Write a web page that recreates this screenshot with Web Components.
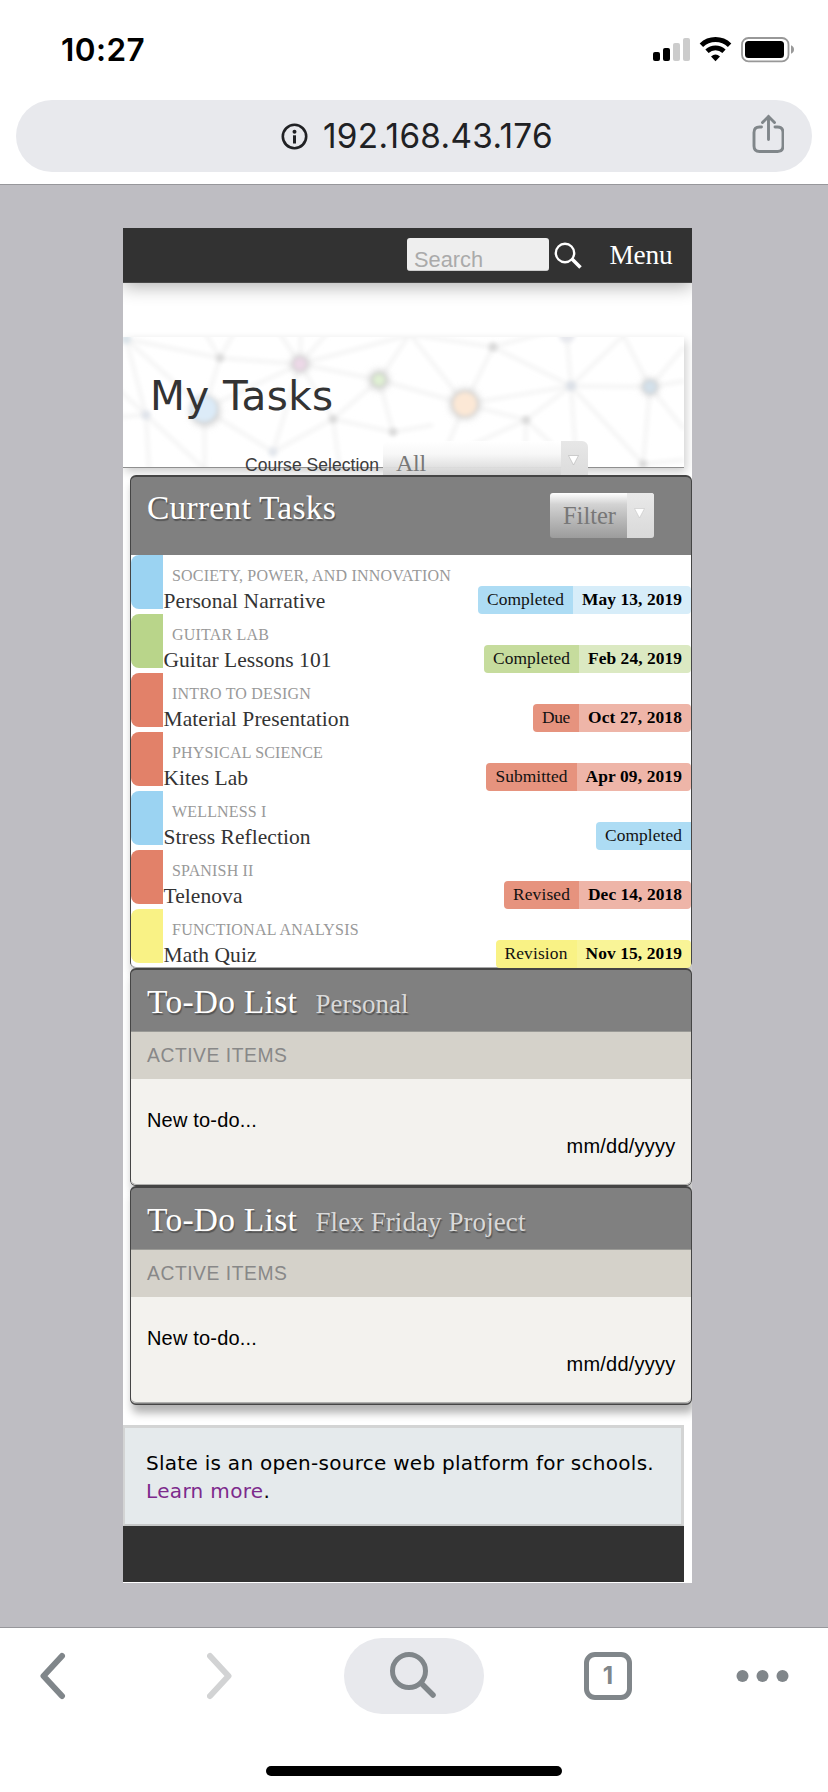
<!DOCTYPE html>
<html lang="en">
<head>
<meta charset="utf-8">
<title>My Tasks</title>
<style>
html, body { margin: 0; padding: 0; }
body { width: 828px; height: 1792px; background: #fff; overflow: hidden; font-family: "Liberation Serif", serif; }
</style>
</head>
<body>
<phone-screen>
  <status-bar slot="top"></status-bar>
  <address-bar slot="top"></address-bar>
  <slate-page>
    <slate-header></slate-header>
    <slate-banner></slate-banner>
    <slate-panel id="tasks">
      <tasks-head slot="head"></tasks-head>
      <task-row color="#9bd3f2" label-bg="#addcf4" date-bg="#d7edf9" course="SOCIETY, POWER, AND INNOVATION" cw="279" name="Personal Narrative" nw="162" label="Completed" lw="77" date="May 13, 2019" dw="100"></task-row>
      <task-row color="#b9d58a" label-bg="#c6dc9d" date-bg="#dbe9c2" course="GUITAR LAB" cw="97" name="Guitar Lessons 101" nw="168" label="Completed" lw="77" date="Feb 24, 2019" dw="94"></task-row>
      <task-row color="#e28169" label-bg="#e6937e" date-bg="#eeb5a8" course="INTRO TO DESIGN" cw="139" name="Material Presentation" nw="186" label="Due" lw="28" date="Oct 27, 2018" dw="94"></task-row>
      <task-row color="#e28169" label-bg="#e6937e" date-bg="#eeb5a8" course="PHYSICAL SCIENCE" cw="151" name="Kites Lab" nw="84.500" label="Submitted" lw="72" date="Apr 09, 2019" dw="96.500"></task-row>
      <task-row color="#9bd3f2" label-bg="#addcf4" date-bg="#d7edf9" course="WELLNESS I" cw="94.500" name="Stress Reflection" nw="147" label="Completed" lw="77"></task-row>
      <task-row color="#e28169" label-bg="#e6937e" date-bg="#eeb5a8" course="SPANISH II" cw="81.500" name="Telenova" nw="79" label="Revised" lw="57" date="Dec 14, 2018" dw="94"></task-row>
      <task-row color="#f9f285" label-bg="#f9f285" date-bg="#f9f497" course="FUNCTIONAL ANALYSIS" cw="187" name="Math Quiz" nw="93" label="Revision" lw="63" date="Nov 15, 2019" dw="96.500"></task-row>
    </slate-panel>
    <slate-panel class="todo">
      <todo-head slot="head" name="Personal" w="93"></todo-head>
      <todo-body></todo-body>
    </slate-panel>
    <slate-panel class="todo last">
      <todo-head slot="head" name="Flex Friday Project" w="210"></todo-head>
      <todo-body></todo-body>
    </slate-panel>
    <slate-footer></slate-footer>
  </slate-page>
  <tool-bar slot="bottom"></tool-bar>
</phone-screen>

<script>
const define = (name, markup) => customElements.define(name, class extends HTMLElement {
  connectedCallback() {
    if (this.shadowRoot) return;
    const a = (k) => this.getAttribute(k) || '';
    this.attachShadow({ mode: 'open' }).innerHTML = typeof markup === 'function' ? markup(a) : markup;
  }
});

define('phone-screen', `
<style>
:host { display: flex; flex-direction: column; width: 828px; height: 1792px; background: #fff; }
.top { height: 184px; border-bottom: 1px solid #97979b; }
main { flex: 1; background: #bebdc2; padding: 43px 136px 0 123px; overflow: hidden; }
.bottom { height: 164px; border-top: 1px solid #97979b; }
</style>
<div class="top"><slot name="top"></slot></div>
<main><slot></slot></main>
<div class="bottom"><slot name="bottom"></slot></div>`);

define('status-bar', `
<style>
:host { display: flex; justify-content: space-between; height: 100px; box-sizing: border-box; padding: 30px 33px 0 61px; }
fit-text { font: 600 31.500px/40px Inter, sans-serif; color: #000; }
svg { display: block; margin-top: 7px; }
</style>
<fit-text w="84">10:27</fit-text>
<svg width="142" height="26" viewBox="653 37 142 26">
  <rect x="653" y="52" width="7" height="9" rx="2"/><rect x="663" y="48" width="7" height="13" rx="2"/>
  <rect x="673" y="43" width="7" height="18" rx="2" fill="#ccc"/><rect x="683" y="38" width="7" height="23" rx="2" fill="#ccc"/>
  <path d="M701.400 45.200 A20.500 20.500 0 0 1 729.600 45.200" fill="none" stroke="#000" stroke-width="5"/>
  <path d="M707 51.300 A12.500 12.500 0 0 1 724 51.300" fill="none" stroke="#000" stroke-width="4.800"/>
  <path d="M711 56.600 Q715.500 52.600 720 56.600 L715.500 61.200 Z"/>
  <rect x="742" y="38" width="46.500" height="23.300" rx="6.500" fill="none" stroke="#989898" stroke-width="1.800"/>
  <rect x="745" y="41" width="39" height="17" rx="3.500"/>
  <path d="M791 45.300 Q794 46.500 794 49.500 T791 53.700 Z" fill="#999"/>
</svg>`);

define('address-bar', `
<style>
:host { display: grid; grid-template-columns: 280px 1fr auto; align-items: center; height: 72px; margin: 0 16px; border-radius: 36px; background: #e8e9ed; box-sizing: border-box; padding: 0 28px 0 0; }
.info { justify-self: end; margin-right: -12px; }
fit-text { font: 400 33.300px/40px Inter, sans-serif; color: #202124; margin-left: 27px; }
svg { display: block; }
</style>
<svg class="info" width="27" height="27" viewBox="0 0 27 27"><circle cx="13.500" cy="13.500" r="11.700" fill="none" stroke="#202124" stroke-width="2.600"/><circle cx="13.500" cy="8.700" r="2" fill="#202124"/><rect x="12" y="12.300" width="3" height="8.200" fill="#202124"/></svg>
<fit-text w="230">192.168.43.176</fit-text>
<svg width="32" height="40" viewBox="0 0 32 40" style="margin-top:-4px" fill="none" stroke="#80868a" stroke-width="2.900" stroke-linecap="round"><path d="M9.500 13 H7.500 Q2 13 2 18.500 V32 Q2 37.500 7.500 37.500 H25.500 Q31 37.500 31 32 V18.500 Q31 13 25.500 13 H23"/><path d="M16.500 25.500 V2.500 M10.500 8.500 L16.500 2.500 L22.500 8.500"/></svg>`);

define('slate-page', `
<style>
:host { display: block; width: 569px; height: 1355px; background: #fff; overflow: hidden; }
::slotted(#tasks) { height: 493px; margin-top: 7px; }
::slotted(.todo) { height: 218px; }
::slotted(.last) { height: 219px; }
</style><slot></slot>`);

define('slate-header', `
<style>
:host { display: flex; position: relative; height: 55px; box-sizing: border-box; padding: 10px 19.500px 0 284px; background: #323232; box-shadow: inset 0 -1px #484848, 0 4px 18px rgba(0,0,0,.3); }
.field { width: 142px; height: 33px; box-sizing: border-box; border-radius: 3px; background: #eee; border-bottom: 1px solid #ccc; overflow: hidden; padding: 6px 0 0 7px; }
.field fit-text { font: 21.800px/32px "Liberation Sans", sans-serif; color: #aaa; }
svg { margin: 4px 0 0 5px; }
.menu { font-size: 27.300px; line-height: 34px; color: #fff; margin-left: auto; }
</style>
<div class="field"><fit-text w="69">Search</fit-text></div>
<svg width="30" height="28" viewBox="0 0 30 28" fill="none" stroke="#fff"><circle cx="11" cy="11" r="9.200" stroke-width="2.400"/><path d="M17.500 16.500 L26.500 25.500" stroke-width="3.600"/></svg>
<fit-text class="menu" w="63">Menu</fit-text>`);

const edges = [[3,2,97,21],[97,21,177,27],[177,27,256,43],[97,21,81,-6],[97,21,112,-6],[177,27,155,-6],[177,27,178,-6],[177,27,206,-6],[177,27,290,-3],[97,21,81,72],[81,72,177,27],[3,2,23,78],[3,2,81,72],[23,78,-5,52],[23,78,-5,80],[23,78,26,132],[23,78,90,140],[81,72,82,134],[81,72,150,115],[150,115,177,27],[177,27,210,82],[150,115,210,82],[210,82,256,43],[210,82,270,95],[210,82,217,134],[256,43,270,95],[256,43,288,-5],[256,43,342,67],[270,95,310,88],[342,67,286,-4],[342,67,370,10],[290,-2,370,10],[370,10,425,-5],[370,10,448,49],[342,67,448,49],[342,67,403,83],[342,67,324,110],[403,83,448,49],[403,83,430,108],[403,83,402,134],[403,83,340,112],[448,49,444,0],[448,49,527,50],[448,49,502,-3],[448,49,454,134],[448,49,520,127],[527,50,498,-6],[527,50,561,10],[527,50,561,44],[527,50,520,127],[527,50,561,92],[520,127,561,123]];
const nodes = [[97,21,4,'#d9d9d9'],[177,27,6.5,'#ecd8e7'],[256,43,6.5,'#d8e6cd'],[23,78,4.5,'#dfe3ea'],[150,115,4.5,'#e2e6ec'],[210,82,4,'#d9d9d9'],[270,95,4,'#d9d9d9'],[3,2,5,'#dbe4ea'],[370,10,4.5,'#d9d9d9'],[448,49,5,'#dbe0e7'],[527,50,6.5,'#d3e0ea'],[403,83,4,'#d9d9d9'],[520,127,4,'#d9d9d9'],[444,-2,8,'#e8e9ee']];
define('slate-banner', `
<style>
:host { display: grid; width: 561px; height: 131px; margin-top: 54px; box-sizing: border-box; border-bottom: 1px solid #8f8f8f; background: #fff; box-shadow: 2px 4px 9px rgba(0,0,0,.2); position: relative; }
svg.net { grid-area: 1/1; display: block; }
.fg { grid-area: 1/1; position: relative; }
h1 { margin: 33px 0 0 27px; font: 40.500px/52px "DejaVu Sans", sans-serif; color: #333; }
.row { display: flex; margin: 19px 0 0 122px; height: 44px; }
.label { font: 17.500px/48px "Liberation Sans", sans-serif; color: #3c3c3c; }
.select { margin-left: 4px; display: flex; width: 205px; height: 44px; border-radius: 6px; overflow: hidden; background: linear-gradient(rgba(255,255,255,.95), rgba(247,247,247,.95) 30%, rgba(190,190,190,.95)); }
.select fit-text { font-size: 24px; line-height: 44px; color: #777; margin-left: 13px; }
.arrow { margin-left: auto; width: 27px; background: linear-gradient(#e7e7e7, #d9d9d9); display: grid; justify-items: center; padding: 14px 2px 0 0; box-sizing: border-box; }
</style>
<svg class="net" width="561" height="130" viewBox="0 0 561 130">
  <defs><filter id="b" x="-20%" y="-20%" width="140%" height="140%"><feGaussianBlur stdDeviation="2.200"/></filter><filter id="c" x="-50%" y="-50%" width="200%" height="200%"><feGaussianBlur stdDeviation="3.500"/></filter></defs>
  <g filter="url(#b)" stroke="#f3f3f3" stroke-width="3.400">${edges.map(e => `<line x1="${e[0]}" y1="${e[1]}" x2="${e[2]}" y2="${e[3]}"/>`).join('')}</g>
  <g filter="url(#c)" fill="#d0d0d0"><circle cx="82" cy="74" r="15"/><circle cx="342" cy="67" r="15"/><circle cx="177" cy="27" r="9"/><circle cx="256" cy="43" r="10"/><circle cx="527" cy="50" r="8.500"/></g>
  <g filter="url(#b)">${nodes.map(n => `<circle cx="${n[0]}" cy="${n[1]}" r="${n[2]}" fill="${n[3]}"/>`).join('')}<circle cx="81" cy="72" r="13" fill="#dcebf8"/><circle cx="342" cy="67" r="12" fill="#fce8d6"/><circle cx="256" cy="43" r="5" fill="#e0f1d4"/></g>
</svg>
<div class="fg">
  <h1><fit-text w="183.500">My Tasks</fit-text></h1>
  <div class="row"><fit-text class="label" w="134">Course Selection</fit-text>
    <div class="select"><fit-text w="30">All</fit-text><div class="arrow"><svg width="11" height="11" viewBox="0 0 11 11"><path d="M.5 .5 H10.500 L5.500 10Z" fill="#fff" stroke="#bbb" stroke-width=".7"/></svg></div></div>
  </div>
</div>`);

define('slate-panel', `
<style>
:host { display: block; position: relative; margin-left: 7px; width: 562px; box-sizing: border-box; border: 1px solid #454545; border-top-width: 2px; border-radius: 6px; background: #808080; box-shadow: 2px 8px 9px rgba(0,0,0,.3); }
.body { background: #fff; border-radius: 0 0 5px 5px; box-shadow: inset 0 -1px #aaa; }
</style>
<slot name="head"></slot><div class="body"><slot></slot></div>`);

define('tasks-head', `
<style>
:host { display: flex; justify-content: space-between; height: 78px; box-sizing: border-box; padding: 10px 37px 0 16px; }
.title { font-size: 33.500px; line-height: 42px; color: #fff; text-shadow: 1px 2px 1px rgba(0,0,0,.35); }
.filter { margin-top: 6px; display: flex; width: 104px; height: 45px; border-radius: 3px; overflow: hidden; background: linear-gradient(#fff, #d3d3d3 25%, #b8b8b8 60%, #9c9c9c); }
.filter fit-text { font-size: 24.500px; line-height: 45px; color: #777; margin-left: 13px; }
.arrow { margin-left: auto; width: 27px; background: linear-gradient(#e9e9e9, #d9d9d9); display: grid; justify-items: center; padding: 15px 3px 0 0; box-sizing: border-box; }
</style>
<fit-text class="title" w="189">Current Tasks</fit-text>
<div class="filter"><fit-text w="53">Filter</fit-text><div class="arrow"><svg width="11" height="11" viewBox="0 0 11 11"><path d="M.5 .5 H10.500 L5.500 10Z" fill="#fff" stroke="#ccc" stroke-width=".7"/></svg></div></div>`);

define('task-row', (a) => `
<style>
:host { display: grid; grid-template-columns: 32px 1fr auto; height: 59px; }
.tab { height: 54px; border-radius: 8px 0 0 8px; background: ${a('color')}; }
.text { display: grid; grid-template-rows: 25px 26px; padding-top: 8px; justify-items: start; }
.course { font-size: 16px; line-height: 25px; color: #999; margin-left: 9px; }
.name { font-size: 21.500px; line-height: 26px; color: #333; margin-left: .5px; }
.badge { display: flex; align-self: start; margin-top: 31px; height: 28px; border-radius: 4px ${a('date') ? '4px 4px' : '0 0'} 4px; overflow: hidden; font-size: 17.400px; line-height: 27px; color: #111; }
.badge div { padding: 0 9px; }
.l { background: ${a('label-bg')}; } .d { background: ${a('date-bg')}; font-weight: bold; color: #000; }
</style>
<div class="tab"></div>
<div class="text"><fit-text class="course" w="${a('cw')}">${a('course')}</fit-text><fit-text class="name" w="${a('nw')}">${a('name')}</fit-text></div>
<div class="badge"><div class="l"><fit-text w="${a('lw')}">${a('label')}</fit-text></div>${a('date') ? `<div class="d"><fit-text w="${a('dw')}">${a('date')}</fit-text></div>` : ''}</div>`);

define('todo-head', (a) => `
<style>
:host { display: flex; align-items: baseline; height: 62px; box-sizing: border-box; padding: 10px 15px 0 16px; border-bottom: 1px solid #9a9a96; text-shadow: 1px 2px 1px rgba(0,0,0,.35); }
.t { font-size: 33.500px; line-height: 44px; color: #fff; }
.n { font-size: 27px; line-height: 44px; color: #d9d9d9; margin-left: 18.500px; }
</style>
<fit-text class="t" w="150">To-Do List</fit-text><fit-text class="n" w="${a('w')}">${a('name')}</fit-text>`);

define('todo-body', `
<style>
:host { display: flex; flex-direction: column; height: 153px; background: #f3f2ee; font: 20px/24px "Liberation Sans", sans-serif; color: #000; border-radius: 0 0 5px 5px; box-shadow: inset 0 -1px #b0b0ae; }
.strip { height: 47px; background: #d5d2ca; color: #888; font-size: 19.300px; line-height: 48px; padding-left: 16px; }
.new { margin: 29px 0 0 16px; align-self: start; }
.date { margin: 1.500px 15.500px 0 0; align-self: end; }
</style>
<div class="strip"><fit-text w="140.500">ACTIVE ITEMS</fit-text></div>
<fit-text class="new" w="110">New to-do...</fit-text>
<fit-text class="date" w="109">mm/dd/yyyy</fit-text>`);

define('slate-footer', `
<style>
:host { display: block; width: 561px; margin-top: 20px; border-bottom: 56px solid #323232; font: 20px/27.500px "DejaVu Sans", sans-serif; color: #000; }
.box { height: 100.500px; box-sizing: border-box; border: 3px solid #d3d4d4; border-left-width: 2px; border-bottom: 2px solid #c6c8c8; background: #e5eaec; padding: 22px 0 0 21px; }
a { color: #7d2a8c; text-decoration: none; }
.line { display: flex; }
</style>
<div class="box"><div class="line"><fit-text w="508">Slate is an open-source web platform for schools.</fit-text></div><div class="line"><a><fit-text w="117.500">Learn more</fit-text></a>.</div></div>`);

define('tool-bar', `
<style>
:host { display: flex; flex-direction: column; align-items: center; height: 164px; padding-top: 10px; box-sizing: border-box; }
.icons { display: grid; grid-template-columns: 167px 137px 240px 137px 1fr; align-items: center; align-self: stretch; height: 76px; padding: 0 0 0 40px; }
.icons svg { display: block; }
.search { width: 140px; height: 76px; border-radius: 38px; background: #e8e9ed; display: grid; place-items: center; }
.tabs { width: 48px; height: 48px; box-sizing: border-box; border: 5px solid #80868a; border-radius: 11px; font: 700 24px/38px Inter, sans-serif; color: #80868a; text-align: center; }
.home { width: 296px; height: 10px; border-radius: 5px; background: #000; margin-top: 52px; }
</style>
<div class="icons">
<svg width="26" height="48" viewBox="0 0 26 48" fill="none" stroke="#80868a" stroke-width="6" stroke-linecap="round" stroke-linejoin="round"><path d="M22 4 L3.500 24 L22 44"/></svg>
<svg width="26" height="48" viewBox="0 0 26 48" fill="none" stroke="#d2d3d4" stroke-width="6" stroke-linecap="round" stroke-linejoin="round"><path d="M3 4 L21.500 24 L3 44"/></svg>
<div class="search"><svg width="50" height="50" viewBox="0 0 50 50" fill="none" stroke="#80868a" stroke-width="5" stroke-linecap="round"><circle cx="20" cy="20" r="16.500"/><path d="M32.500 32.500 L44 44" stroke-width="5.500"/></svg></div>
<div class="tabs">1</div>
<svg width="54" height="12" viewBox="0 0 54 12" style="margin-left:15px" fill="#80868a"><circle cx="6.500" cy="6" r="6"/><circle cx="26.500" cy="6" r="6"/><circle cx="46.500" cy="6" r="6"/></svg>
</div>
<div class="home"></div>`);

/* Tracks its text out or in so that the run takes the width in "w". */
customElements.define('fit-text', class extends HTMLElement {
  connectedCallback() {
    if (this.shadowRoot) return;
    this.attachShadow({ mode: 'open' }).innerHTML = '<style>:host { display: inline-block; white-space: nowrap; }</style><slot></slot>';
    const w = parseFloat(this.getAttribute('w'));
    const range = document.createRange();
    range.selectNodeContents(this);
    const natural = range.getBoundingClientRect().width;
    const n = this.textContent.length;
    if (w && natural && n) this.style.letterSpacing = ((w - natural) / n).toFixed(3) + 'px';
  }
});
</script>
</body>
</html>
